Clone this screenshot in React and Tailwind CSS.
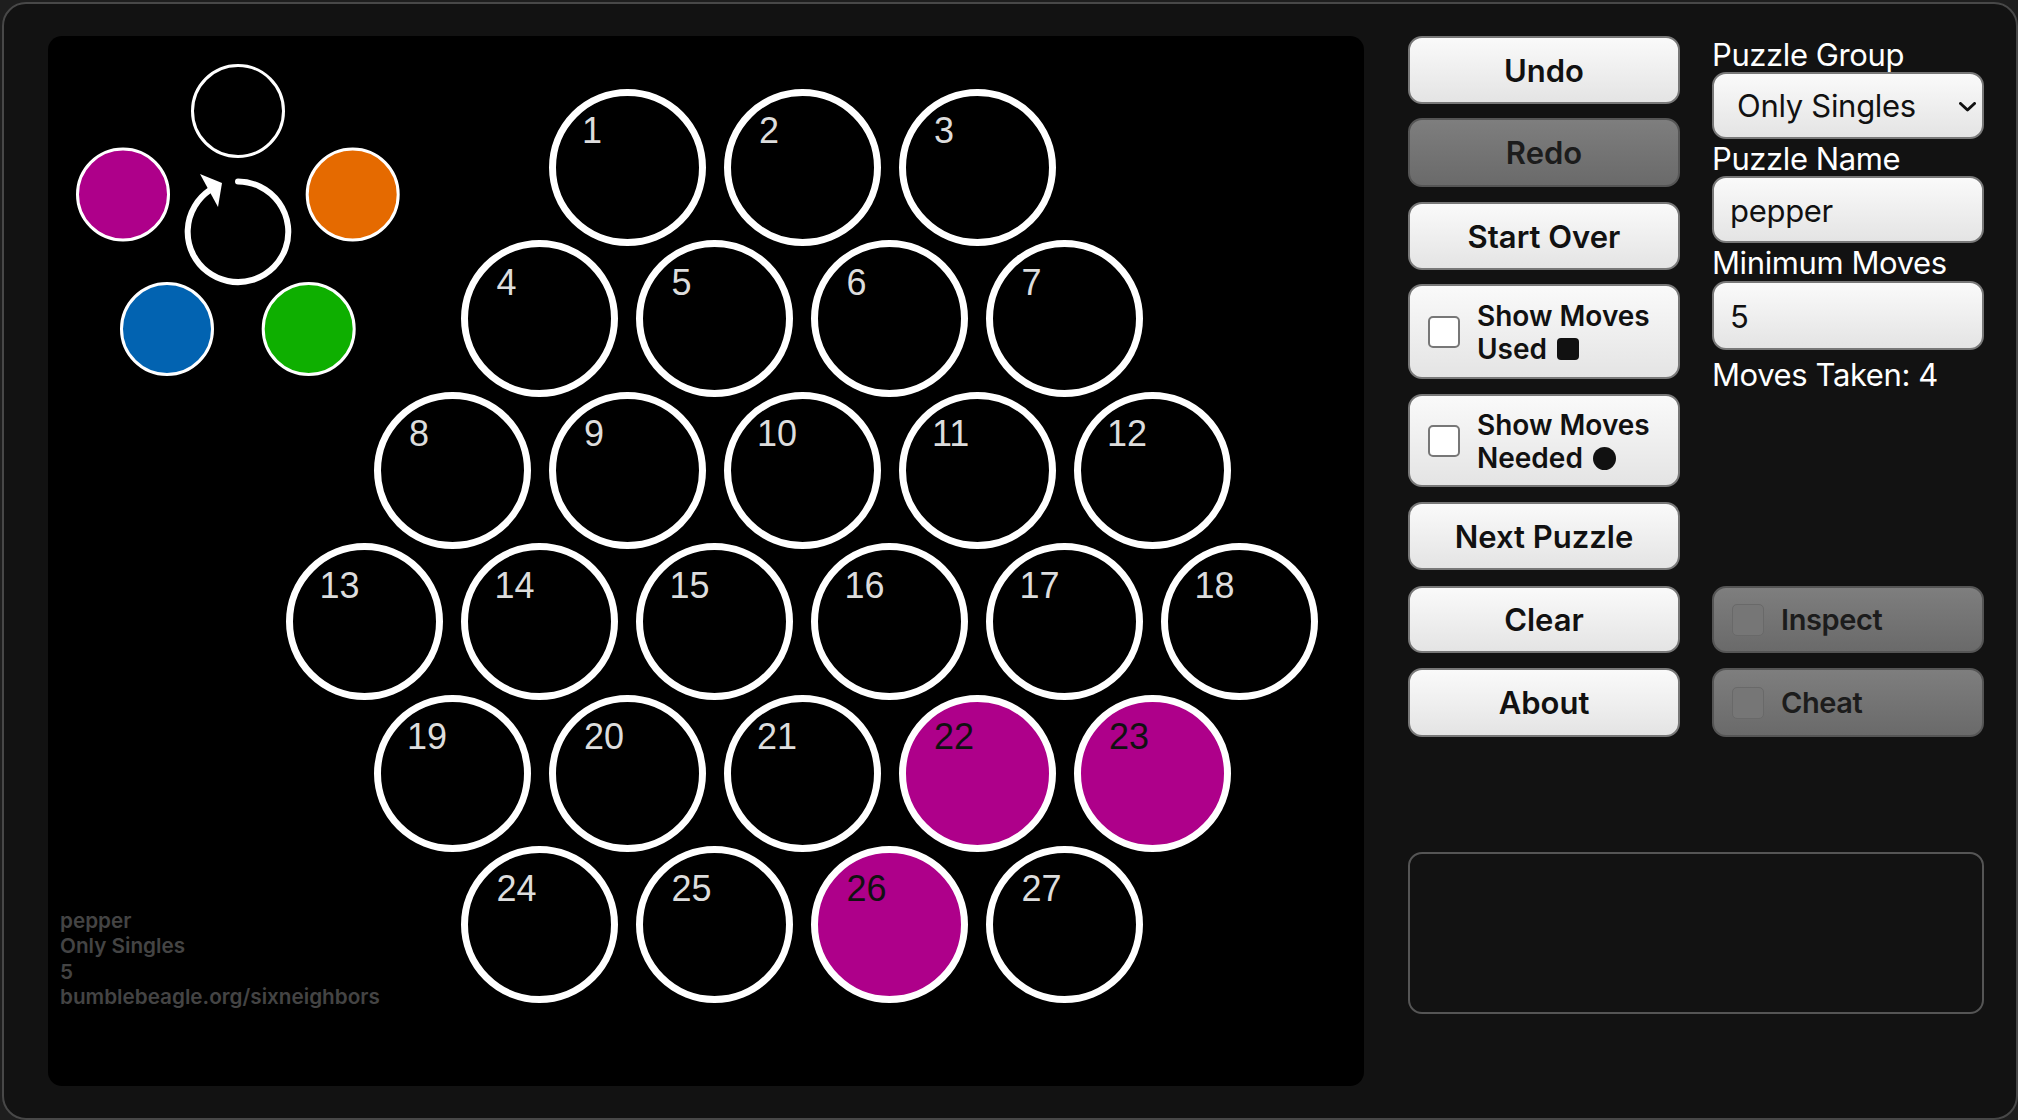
import React from 'react';

const rows = [
  [1, 2, 3],
  [4, 5, 6, 7],
  [8, 9, 10, 11, 12],
  [13, 14, 15, 16, 17, 18],
  [19, 20, 21, 22, 23],
  [24, 25, 26, 27],
];
const filled = [22, 23, 26];

const sans = "font-['Inter','Liberation_Sans',sans-serif]";
const raised = 'rounded-[14px] border-2 border-[#787878] bg-linear-to-b from-[#fafafa] to-[#e4e4e4] text-[#111]';
const dimmed = 'rounded-[14px] border-2 border-[#555] bg-linear-to-b from-[#7e7e7e] to-[#6a6a6a] text-[#1c1c1c]';

const Cell = ({ n }) => {
  const on = filled.includes(n);
  // the ones sit a little further left in the picture
  const hasOne = String(n).includes('1');
  return (
    <div className={`w-[157px] h-[157px] shrink-0 rounded-full border-[7.5px] border-white pt-[14.5px] font-['Liberation_Sans',sans-serif] text-[36px] leading-[42px] ${hasOne ? 'pl-[26.5px]' : 'pl-[28.5px]'} ${on ? 'bg-[#ae008a] text-[#111]' : 'bg-black text-[#ddd]'}`}>
      {n}
    </div>
  );
};

const Dial = () => (
  <svg className="absolute left-0 top-0" width="360" height="350" viewBox="48 36 360 350">
    <circle cx="238" cy="111" r="45.5" fill="none" stroke="#fff" strokeWidth="3" />
    <circle cx="123" cy="194.5" r="45.5" fill="#ae008a" stroke="#fff" strokeWidth="3" />
    <circle cx="352.7" cy="194.5" r="45.5" fill="#e56a00" stroke="#fff" strokeWidth="3" />
    <circle cx="167" cy="329" r="45.5" fill="#0263b1" stroke="#fff" strokeWidth="3" />
    <circle cx="308.7" cy="329" r="45.5" fill="#0eaf00" stroke="#fff" strokeWidth="3" />
    <path d="M238 181.5 A50.3 50.3 0 1 1 210 190" fill="none" stroke="#fff" strokeWidth="6" strokeLinecap="round" />
    <polygon points="200,174 222,183 218,207" fill="#fff" />
  </svg>
);

const Btn = ({ label, className = '', disabled }) => (
  <button className={`w-full flex items-center justify-center pt-[2px] text-[31px] font-semibold ${disabled ? dimmed : raised} ${className}`}>
    {label}
  </button>
);

const CheckBtn = ({ first, second, mark, className = '' }) => (
  <div className={`flex items-center pl-[18px] text-[28px] leading-[33px] font-semibold ${raised} ${className}`}>
    <span className="w-[32px] h-[32px] shrink-0 rounded-[5px] border-2 border-[#777] bg-white" />
    <div className="ml-[17px] pt-[2px]">
      <div>{first}</div>
      <div className="flex items-center">{second}{mark}</div>
    </div>
  </div>
);

const DimCheck = ({ label }) => (
  <div className={`h-full flex items-center pl-[18px] text-[29px] font-semibold ${dimmed}`}>
    <span className="w-[32px] h-[32px] shrink-0 rounded-[5px] border border-[#696969] bg-[#767676]" />
    <span className="ml-[17px]">{label}</span>
  </div>
);

const fieldClass = 'w-full h-[67px] pl-[16px] pt-[2px] text-[31px] tracking-[-0.3px] outline-none ' + raised;

export default function App() {
  return (
    <div className={`${sans} w-[2018px] h-[1120px] bg-[#1e1e1e]`}>
      <div className="w-[2016px] h-[1118px] ml-[2px] mt-[2px] float-left rounded-[24px] border-2 border-[#484848] bg-[#121212] flex pl-[44px] pt-[32px] overflow-hidden">
        <div className="relative w-[1316px] h-[1050px] shrink-0 rounded-[14px] bg-black pt-[52.5px] pl-[192px]">
          <Dial />
          <div className="flex flex-col">
            {rows.map((row, i) => (
              <div key={i} className="h-[151.6px] flex justify-center gap-[18px]">
                {row.map((n) => <Cell key={n} n={n} />)}
              </div>
            ))}
          </div>
          <div className="absolute left-[12px] top-[872px] text-[20.7px] leading-[25.4px] font-semibold text-[#444]">
            <div>pepper</div>
            <div>Only Singles</div>
            <div>5</div>
            <div>bumblebeagle.org/sixneighbors</div>
          </div>
        </div>

        <div className="ml-[44px] w-[576px] shrink-0">
          <div className="grid grid-cols-[272px_272px] gap-x-[32px]">
            <div className="flex flex-col">
              <Btn label="Undo" className="h-[68px]" />
              <Btn label="Redo" disabled className="h-[69px] mt-[14px]" />
              <Btn label="Start Over" className="h-[68px] mt-[15px]" />
              <CheckBtn first="Show Moves" second="Used" className="h-[95px] mt-[14px]" mark={<span className="ml-[10px] w-[22px] h-[22px] rounded-[4px] bg-[#111]" />} />
              <CheckBtn first="Show Moves" second="Needed" className="h-[93px] mt-[15px]" mark={<span className="ml-[10px] w-[23px] h-[23px] rounded-full bg-[#111]" />} />
              <Btn label="Next Puzzle" className="h-[68px] mt-[15px]" />
              <Btn label="Clear" className="h-[67px] mt-[16px]" />
              <Btn label="About" className="h-[69px] mt-[15px]" />
            </div>

            <div className="flex flex-col text-white text-[31px] tracking-[-0.4px]">
              <label className="leading-[34px] pt-[2px]">Puzzle Group</label>
              <div className="relative">
                <select className={`${fieldClass} appearance-none pl-[23px]`} defaultValue="Only Singles">
                  <option>Only Singles</option>
                </select>
                <svg className="absolute right-[8px] top-[30px]" width="17" height="10" viewBox="0 0 17 10">
                  <path d="M1.5 1.5 L8.5 8 L15.5 1.5" fill="none" stroke="#111" strokeWidth="3" strokeLinecap="round" strokeLinejoin="round" />
                </svg>
              </div>
              <label className="leading-[34px] pt-[2px] mt-[1px]">Puzzle Name</label>
              <input className={fieldClass} defaultValue="pepper" />
              <label className="leading-[36px] mt-[2px]">Minimum Moves</label>
              <input className={`${fieldClass} h-[69px]`} defaultValue="5" />
              <div className="leading-[36px] mt-[7px]">Moves Taken: 4</div>
              <div className="mt-auto h-[67px]"><DimCheck label="Inspect" /></div>
              <div className="h-[69px] mt-[15px]"><DimCheck label="Cheat" /></div>
            </div>
          </div>
          <div className="mt-[115px] h-[162px] w-[576px] rounded-[14px] border-2 border-[#555]" />
        </div>
      </div>
    </div>
  );
}
